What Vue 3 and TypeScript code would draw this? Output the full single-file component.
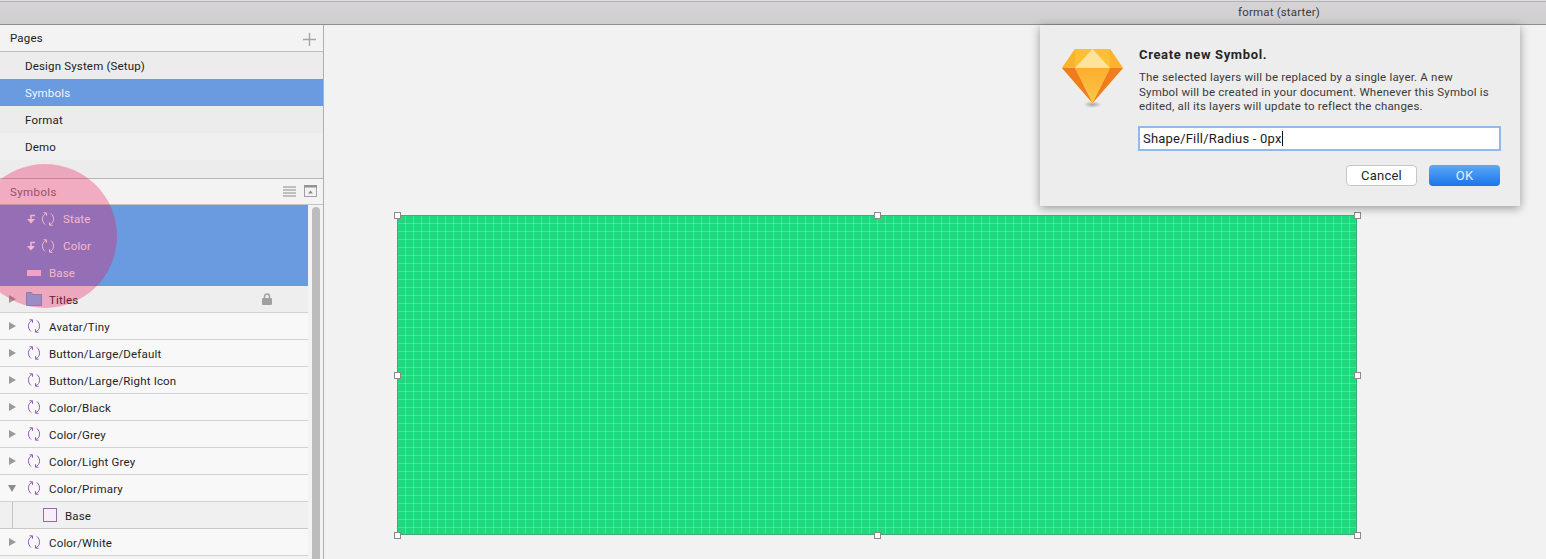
<script setup lang="ts">
type Row = { name: string; icon: 'folder' | 'sync' | 'rect' | 'square'; open?: boolean; lock?: boolean; child?: boolean; alt?: boolean }
const pages = ['Design System (Setup)', 'Symbols', 'Format', 'Demo']
const selected = [
  { name: 'State', kind: 'override' },
  { name: 'Color', kind: 'override' },
  { name: 'Base', kind: 'rect' },
]
const rows: Row[] = [
  { name: 'Titles', icon: 'folder', lock: true, alt: true },
  { name: 'Avatar/Tiny', icon: 'sync' },
  { name: 'Button/Large/Default', icon: 'sync' },
  { name: 'Button/Large/Right Icon', icon: 'sync' },
  { name: 'Color/Black', icon: 'sync' },
  { name: 'Color/Grey', icon: 'sync' },
  { name: 'Color/Light Grey', icon: 'sync' },
  { name: 'Color/Primary', icon: 'sync', open: true },
  { name: 'Base', icon: 'square', child: true },
  { name: 'Color/White', icon: 'sync' },
]
const handles = [
  [0, 0], [50, 0], [100, 0], [0, 50], [100, 50], [0, 100], [50, 100], [100, 100],
]
const paragraph = [
  'The selected layers will be replaced by a single layer. A new',
  'Symbol will be created in your document. Whenever this Symbol is',
  'edited, all its layers will update to reflect the changes.',
]
</script>

<template>
  <div class="app">
    <header class="titlebar"><span>format (starter)</span></header>
    <div class="main">
      <aside class="sidebar">
        <div class="panel-head">
          <span>Pages</span>
          <svg class="plus" width="13" height="13" viewBox="0 0 13 13"><path d="M6.500 0v13M0 6.500h13" stroke="#a5a5a5" stroke-width="1.400" /></svg>
        </div>
        <ul class="pages">
          <li v-for="p in pages" :key="p" :class="{ active: p === 'Symbols' }">{{ p }}</li>
        </ul>
        <div class="panel-head symbols-head">
          <span>Symbols</span>
          <div class="head-icons">
            <svg width="13" height="11" viewBox="0 0 13 11"><path d="M0 1h13M0 4h13M0 7h13M0 10h13" stroke="#8c8c8c" stroke-width="1.200" /></svg>
            <svg width="13" height="12" viewBox="0 0 13 12"><rect x=".5" y=".5" width="12" height="11" fill="none" stroke="#a0a0a0" /><path d="M0 1.500h13" stroke="#909090" stroke-width="2" /><path d="M4 8.500l2.500-3 2.500 3z" fill="#8c8c8c" /></svg>
          </div>
        </div>
        <div class="list-wrap">
          <div class="list">
            <div v-for="s in selected" :key="s.name" class="row selected">
              <template v-if="s.kind === 'override'">
                <svg class="override" width="8" height="10" viewBox="0 0 8 10"><path d="M8 1.500H4V6" fill="none" stroke="currentColor" stroke-width="1.500" /><path d="M0 5h8L4 9.500z" fill="currentColor" /></svg>
                <svg class="sync" width="14" height="14" viewBox="0 0 14 14"><g fill="none" stroke="currentColor" stroke-width="1"><path d="M5 1.500C1 3 0 9 4 12.500" /><path d="M2.500.8h3v3" /><path d="M9 12.500c4-1.500 5-7.500 1-11" /><path d="M11.500 13.200h-3v-3" /></g></svg>
              </template>
              <span v-else class="rect-icon"></span>
              <span class="name">{{ s.name }}</span>
            </div>
            <div v-for="r in rows" :key="r.name + r.icon" class="row" :class="{ alt: r.alt, child: r.child }">
              <span v-if="r.child" class="guide"></span>
              <span v-else class="tri" :class="{ open: r.open }"></span>
              <svg v-if="r.icon === 'folder'" class="folder" width="16" height="14" viewBox="0 0 16 14"><path d="M.5 13.500V.5h5l1 2h9v11z" fill="#74c4f6" stroke="#62a8dc" /></svg>
              <svg v-else-if="r.icon === 'sync'" class="sync plain" width="14" height="14" viewBox="0 0 14 14"><g fill="none" stroke="#9358b8" stroke-width="1"><path d="M5 1.500C1 3 0 9 4 12.500" /><path d="M2.500.8h3v3" /><path d="M9 12.500c4-1.500 5-7.500 1-11" /><path d="M11.500 13.200h-3v-3" /></g></svg>
              <span v-else class="square"></span>
              <span class="name">{{ r.name }}</span>
              <svg v-if="r.lock" class="lock" width="10" height="12" viewBox="0 0 10 12"><path d="M2.500 5.500V3.500a2.500 2.500 0 0 1 5 0v2" fill="none" stroke="#a0a0a0" stroke-width="1.500" /><rect y="5" width="10" height="7" rx="1" fill="#a0a0a0" /></svg>
            </div>
          </div>
          <div class="scroll"><div class="thumb"></div></div>
        </div>
      </aside>
      <main class="canvas">
        <div class="artboard">
          <i v-for="h in handles" :key="h.join()" class="handle" :style="{ left: h[0] + '%', top: h[1] + '%' }"></i>
        </div>
        <section class="dialog">
          <svg class="gem" width="62" height="62" viewBox="0 0 62 62">
            <defs>
              <radialGradient id="sh"><stop offset="0" stop-color="#888" stop-opacity=".7" /><stop offset="1" stop-color="#888" stop-opacity="0" /></radialGradient>
              <linearGradient id="mid" x1="0" y1="0" x2="0" y2="1"><stop offset="0" stop-color="#fbae2e" /><stop offset="1" stop-color="#fdc64a" /></linearGradient>
            </defs>
            <ellipse cx="30.500" cy="55.500" rx="9" ry="3.500" fill="url(#sh)" />
            <path d="M13 0h35l13 19-30.500 35L0 19z" fill="#fdc035" />
            <path d="M30.500 0L13 19h35z" fill="#fee39a" />
            <path d="M13 0l-13 19h13zM48 0l13 19H48z" fill="#fbb22e" />
            <path d="M0 19h13l17.500 35z" fill="#ef7d1f" />
            <path d="M61 19H48L30.500 54z" fill="#ef7d1f" />
            <path d="M13 19h35L30.500 54z" fill="url(#mid)" />
          </svg>
          <div class="dialog-body">
            <h2>Create new Symbol.</h2>
            <p><span v-for="l in paragraph" :key="l" class="line">{{ l }}</span></p>
            <div class="field"><span>Shape/Fill/Radius - 0px</span><i class="caret"></i></div>
            <div class="actions">
              <button class="cancel" type="button">Cancel</button>
              <button class="ok" type="button">OK</button>
            </div>
          </div>
        </section>
      </main>
    </div>
    <div class="spot"></div>
  </div>
</template>

<style>
html, body { margin: 0; overflow: hidden; }
</style>

<style scoped>
.app {
  position: relative;
  width: 1546px;
  height: 559px;
  overflow: hidden;
  display: flex;
  flex-direction: column;
  font: 11.5px/1 Roboto, "Noto Sans", sans-serif;
  letter-spacing: .17px;
  color: #222;
  background: #f2f2f2;
}
.titlebar {
  box-sizing: border-box;
  height: 25px;
  flex: none;
  display: flex;
  justify-content: flex-end;
  align-items: center;
  padding: 2px 226px 0 0;
  background: linear-gradient(#dcdcdc 1px, #b4b2b4 1px, #b4b2b4 2px, #d5d3d5 2px, #d0ced0);
  border-bottom: 1px solid #8f8f8f;
  color: #3b3b3b;
}
.main { flex: 1; display: flex; min-height: 0; }
.sidebar {
  box-sizing: border-box;
  width: 324px;
  flex: none;
  display: flex;
  flex-direction: column;
  border-right: 1px solid #b0b0b0;
  background: #f3f3f3;
}
.panel-head {
  box-sizing: border-box;
  height: 27px;
  flex: none;
  display: flex;
  align-items: center;
  justify-content: space-between;
  padding: 1px 7px 0 10px;
  border-bottom: 1px solid #bcbcbc;
  background: #f3f3f3;
}
.plus { margin-top: 1px; }
.pages {
  list-style: none;
  margin: 0;
  padding: 0 0 18px;
  background: #ececec;
  border-bottom: 1px solid #b5b5b5;
}
.pages li { height: 27px; line-height: 29px; padding-left: 25px; }
.pages li:nth-child(4) { background: #f0f0f0; }
.pages li.active { background: #6a9ae0; color: #f3f6fb; }
.symbols-head { color: #6e6e6e; height: 26px; padding: 2px 6px 0 10px; border-bottom-color: #c4c4c4; letter-spacing: .4px; }
.head-icons { display: flex; gap: 8px; align-items: center; margin-top: -3px; }
.list-wrap { flex: 1; min-height: 0; display: flex; overflow: hidden; }
.list { width: 308px; flex: none; }
.row {
  box-sizing: border-box;
  height: 27px;
  display: flex;
  align-items: center;
  padding-left: 9px;
  background: #f8f8f8;
  border-bottom: 1px solid #d2d2d2;
  color: #1f1f1f;
}
.name { position: relative; top: 2px; }
.row.alt { background: #eeeeee; }
.row.child { background: #f0f0f0; position: relative; border-bottom-color: #c8c8c8; }
.row.selected {
  background: #6a9ae0;
  border-bottom: 0;
  padding-left: 27px;
  color: #ffffff;
}
.row.selected .name { top: 1px; }
.override { margin-right: 6px; flex: none; }
.sync { margin-right: 8px; flex: none; }
.sync.plain { margin-right: 8px; margin-left: -1px; }
.rect-icon { width: 14px; height: 6px; margin-right: 8px; background: #f4e6f8; flex: none; }
.tri {
  width: 0;
  height: 0;
  flex: none;
  margin-right: 12px;
  margin-left: 0;
  border-left: 7px solid #9a9a9a;
  border-top: 4px solid transparent;
  border-bottom: 4px solid transparent;
}
.tri.open {
  border-top: 7px solid #8d8d8d;
  border-left: 4px solid transparent;
  border-right: 4px solid transparent;
  border-bottom: 0;
  margin-right: 12px;
  margin-left: -1px;
}
.folder { margin-left: -2px; margin-right: 7px; flex: none; }
.guide { position: absolute; left: 12px; top: 0; bottom: 0; width: 1px; background: #c4c4c4; }
.square {
  box-sizing: border-box;
  width: 14px;
  height: 14px;
  margin-left: 34px;
  margin-right: 8px;
  background: #f8eefb;
  border: 1px solid #8e6fa8;
}
.lock { margin-left: auto; margin-right: 36px; }
.scroll { flex: 1; padding: 2px 3px 0 4px; }
.thumb { height: 100%; background: #bcbcbc; border-radius: 4px 4px 0 0; }
.canvas {
  flex: 1;
  position: relative;
  box-sizing: border-box;
  padding: 190px 0 0 73px;
  background: #f2f2f2;
}
.artboard {
  position: relative;
  width: 960px;
  height: 320px;
  background-color: #1fd97f;
  background-image:
    linear-gradient(rgba(255, 255, 255, .2) 1px, transparent 1px),
    linear-gradient(90deg, rgba(255, 255, 255, .2) 1px, transparent 1px);
  background-size: 8px 8px;
  box-shadow: inset 0 0 0 1px #3fae7c;
}
.handle {
  position: absolute;
  box-sizing: border-box;
  width: 7px;
  height: 7px;
  margin: -3px 0 0 -3px;
  background: #fff;
  border: 1px solid #8a8a8a;
}
.dialog {
  position: absolute;
  top: 0;
  right: 26px;
  box-sizing: border-box;
  width: 480px;
  height: 181px;
  display: flex;
  padding: 22px 20px 0 22px;
  gap: 15px;
  background: #ededed;
  box-shadow: 0 2px 9px rgba(0, 0, 0, .38);
}
.gem { flex: none; margin-top: 2px; }
.dialog-body { flex: 1; min-width: 0; }
h2 { margin: 0; font: bold 13px/16px Roboto, "Noto Sans", sans-serif; letter-spacing: .65px; color: #262626; }
p { margin: 7px 0 0; line-height: 14.5px; color: #3a3a3a; letter-spacing: .2px; }
.line { display: block; white-space: nowrap; }
.field {
  box-sizing: border-box;
  width: 363px;
  height: 25px;
  margin: 12px 0 0 -1px;
  padding: 1px 0 0 3px;
  display: flex;
  align-items: center;
  background: #fff;
  border: 2px solid #92b9e8;
  font-size: 13px;
  letter-spacing: .2px;
  color: #1c1c1c;
}
.caret { width: 1px; height: 15px; background: #111; }
.actions { display: flex; justify-content: flex-end; gap: 12px; margin-top: 14px; }
button {
  box-sizing: border-box;
  width: 71px;
  height: 21px;
  padding: 0;
  border-radius: 4px;
  font: 13px Roboto, "Noto Sans", sans-serif;
  letter-spacing: .2px;
}
.cancel { background: #fff; border: 1px solid #c6c6c6; color: #262626; }
.ok { background: linear-gradient(#5aaaf6, #1b74ea); border: 0; color: #e6f1fd; }
.spot {
  position: absolute;
  left: -27px;
  top: 164px;
  width: 144px;
  height: 144px;
  border-radius: 50%;
  background: rgba(237, 23, 90, .32);
  pointer-events: none;
}
</style>
